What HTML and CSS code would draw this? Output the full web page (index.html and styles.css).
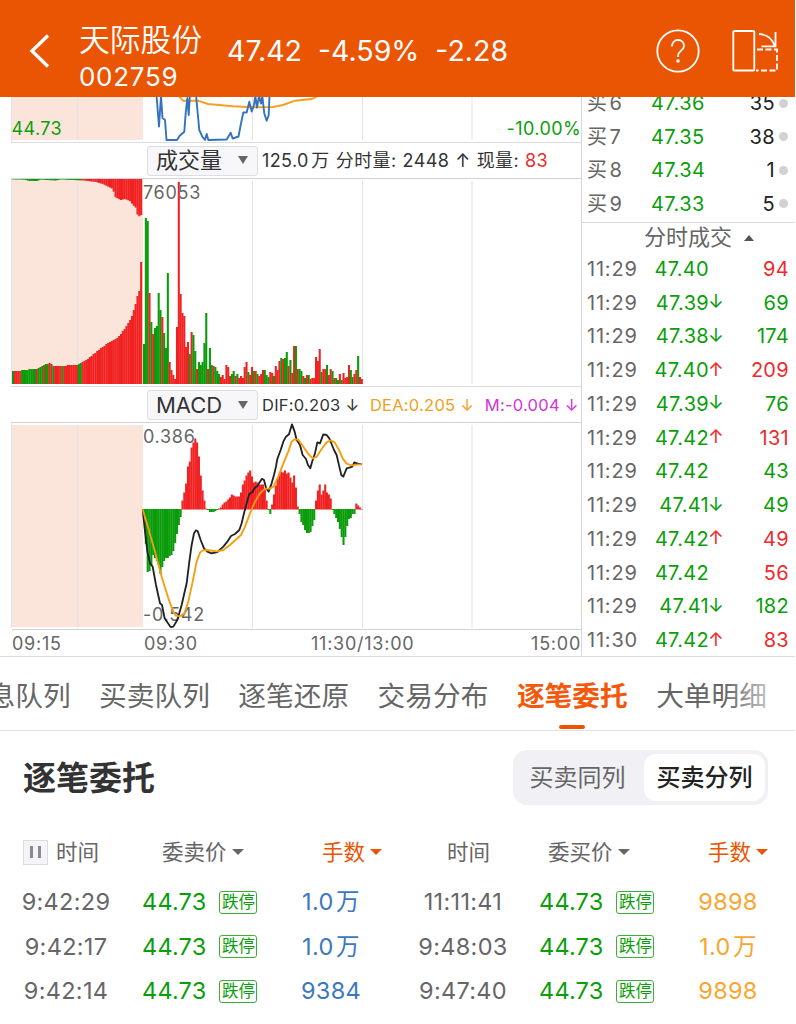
FILE: index.html
```html
<!DOCTYPE html>
<html lang="zh-CN">
<head>
    <meta charset="UTF-8">
    <meta name="viewport" content="width=device-width, initial-scale=1.0">
    <title>天际股份 002759</title>
    <link rel="stylesheet" href="styles.css">
</head>
<body>
    <header class="topbar">
        <svg class="back" width="22" height="36" viewBox="0 0 22 36"><path d="M20 2.500L4 18l16 15.500"/></svg>
        <div class="stock">
            <div class="stock-name">天际股份</div>
            <div class="stock-code">002759</div>
        </div>
        <div class="quote">
            <span>47.42</span>
            <span>-4.59%</span>
            <span>-2.28</span>
        </div>
        <div class="help">
            <svg width="44" height="44" viewBox="0 0 44 44">
                <circle cx="22" cy="22" r="20.700"/>
                <path d="M16 17.500c0-4 2.600-6.500 6-6.500s6 2.400 6 5.700c0 5-6 5-6 10.300v1"/>
                <circle class="dot" cx="22" cy="32" r="1.800"/>
            </svg>
        </div>
        <svg class="rotate" width="48" height="44" viewBox="0 0 48 44">
            <rect x="2.300" y="2" width="21" height="39.500" rx="1"/>
            <path d="M28 5c8 .500 13 4 15.500 11.500M44.500 3v14.300H30.500"/>
            <path class="dash" d="M26 20.500h20v21H25"/>
        </svg>
    </header>

    <main class="market">
        <section class="charts">
            <svg class="chart" id="priceChart" width="581" height="45" viewBox="0 97 581 45">
                <rect class="preopen" x="12" y="97" width="131" height="43"/>
                <path class="grid" d="M11.500 97v45M77.500 97v43M252.500 97v43M362.500 97v43M472 97v43"/>
                <polyline class="avg" points="178,95 183,100.700 198,100.700 208,104 233,106.300 252,107.300 273,107 283,105 295,100.700 312,99 318,96"/>
                <polyline class="price" points="156.500,95 159,126.500 161,96 162.500,118 165,120 166.500,140 177,140 179.500,136 184.300,131.700 185.700,113 187.300,98 188.700,115 190,93 196,95 199.300,130 202.300,136.700 205,140 206.700,134 208.300,140 226.700,139.500 230.700,132.700 232.700,138.500 238.500,136.500 240.700,125 243.300,112.500 246.700,112.500 249.300,101.700 251.700,111.500 254,105 255.300,96 257,107.500 259,96 261,103.500 262.300,96 264.300,113.500 266.700,120.700 268.700,115 269.500,95"/>
                <text class="down" x="11.500" y="135">44.73</text>
                <text class="down" x="581" y="135" text-anchor="end">-10.00%</text>
            </svg>

            <div class="indicator">
                <div class="picker">成交量<i class="caret"></i></div>
                <div class="readout volume-readout">
                    <span>125.0<u>万</u></span>
                    <span>分时量:</span>
                    <span>2448</span>
                    <span>↑</span>
                    <span>现量:</span>
                    <span class="red">83</span>
                </div>
            </div>

            <svg class="chart" id="volumeChart" width="581" height="207" viewBox="0 179 581 207">
                <rect class="preopen" x="12" y="180" width="131" height="204"/>
                <path class="grid" d="M11.500 179v205M77.500 181v203M252.500 181v203M362.500 181v203M472 181v203"/>
                <g id="volumeBars"></g>
                <text x="143" y="199">76053</text>
            </svg>

            <div class="indicator">
                <div class="picker latin">MACD<i class="caret"></i></div>
                <div class="readout macd-readout">
                    <span>DIF:0.203 ↓</span>
                    <span class="dea">DEA:0.205 ↓</span>
                    <span class="macd">M:-0.004 ↓</span>
                </div>
            </div>

            <svg class="chart" id="macdChart" width="581" height="206" viewBox="0 423 581 206">
                <rect class="preopen" x="12" y="425" width="131" height="202"/>
                <path class="grid" d="M11.500 423v205M77.500 425v203M252.500 425v203M362.500 425v203M472 425v203"/>
                <g id="macdBars"></g>
                <text x="143" y="443">0.386</text>
                <text x="143" y="621">-0.542</text>
                <g transform="translate(140 385) scale(.3333)">
                    <polyline class="dif-line" points="8,373 14,430 22,500 30,535 38,545 48,600 60,655 66,660 74,700 84,715 92,726 100,725 112,705 125,660 133,625 140,595 148,530 155,480 162,445 168,436 173,438 182,465 192,490 202,500 215,505 232,501 250,485 262,470 273,453 285,447 298,435 305,415 312,385 320,355 328,327 338,320 345,308 352,303 360,290 366,281 372,285 378,308 386,320 395,295 402,270 408,245 412,222 422,195 430,170 438,155 447,148 456,118 464,140 470,165 480,180 488,210 498,222 504,240 511,250 518,225 525,205 532,172 540,175 550,148 560,150 568,160 576,180 582,195 590,210 598,245 604,270 610,275 620,250 628,248 637,245 643,232 653,236 665,238"/>
                    <polyline class="dea-line" points="8,373 25,430 45,500 65,575 85,640 100,680 108,692 120,694 133,685 145,650 158,590 170,530 180,503 188,496 200,495 230,499 250,495 270,480 290,462 303,450 315,425 330,385 345,350 360,325 375,311 390,311 400,305 415,275 430,235 445,200 455,170 463,163 475,164 490,185 505,207 518,220 530,215 545,192 560,172 572,166 584,172 597,195 608,220 620,236 635,241 650,239 665,238"/>
                </g>
            </svg>

            <div class="axis">
                <span>09:15</span>
                <span>09:30</span>
                <span>11:30/13:00</span>
                <span>15:00</span>
            </div>
        </section>

        <aside class="side">
            <div class="orders">
                <div class="order"><span>买<u>6</u></span><b>47.36</b><em>35</em><i></i></div>
                <div class="order"><span>买<u>7</u></span><b>47.35</b><em>38</em><i></i></div>
                <div class="order"><span>买<u>8</u></span><b>47.34</b><em>1</em><i></i></div>
                <div class="order"><span>买<u>9</u></span><b>47.33</b><em>5</em><i></i></div>
            </div>
            <div class="trades-title">分时成交<i class="caret-up"></i></div>
            <div class="trades">
                <div class="trade"><span>11:29</span><b>47.40</b><i></i><em class="red">94</em></div>
                <div class="trade"><span>11:29</span><b>47.39</b><i>↓</i><em>69</em></div>
                <div class="trade"><span>11:29</span><b>47.38</b><i>↓</i><em>174</em></div>
                <div class="trade"><span>11:29</span><b>47.40</b><i class="red">↑</i><em class="red">209</em></div>
                <div class="trade"><span>11:29</span><b>47.39</b><i>↓</i><em>76</em></div>
                <div class="trade"><span>11:29</span><b>47.42</b><i class="red">↑</i><em class="red">131</em></div>
                <div class="trade"><span>11:29</span><b>47.42</b><i></i><em>43</em></div>
                <div class="trade"><span>11:29</span><b>47.41</b><i>↓</i><em>49</em></div>
                <div class="trade"><span>11:29</span><b>47.42</b><i class="red">↑</i><em class="red">49</em></div>
                <div class="trade"><span>11:29</span><b>47.42</b><i></i><em class="red">56</em></div>
                <div class="trade"><span>11:29</span><b>47.41</b><i>↓</i><em>182</em></div>
                <div class="trade"><span>11:30</span><b>47.42</b><i class="red">↑</i><em class="red">83</em></div>
            </div>
        </aside>
    </main>

    <nav class="tabs">
        <span class="tab">息队列</span>
        <span class="tab">买卖队列</span>
        <span class="tab">逐笔还原</span>
        <span class="tab">交易分布</span>
        <span class="tab active">逐笔委托</span>
        <span class="tab">大单明细</span>
    </nav>

    <section class="entrust">
        <div class="entrust-head">
            <h2>逐笔委托</h2>
            <div class="segment">
                <span>买卖同列</span>
                <span class="on">买卖分列</span>
            </div>
        </div>

        <div class="row head">
            <div class="time"><i class="pause"></i>时间</div>
            <div class="cost">委卖价<i class="sort"></i></div>
            <div class="lots">手数<i class="sort"></i></div>
            <div class="time buy">时间</div>
            <div class="cost buy">委买价<i class="sort"></i></div>
            <div class="lots buy">手数<i class="sort"></i></div>
        </div>
        <div class="row">
            <div class="time">9:42:29</div>
            <div class="cost">44.73<span class="tag">跌停</span></div>
            <div class="lots">1.0<u>万</u></div>
            <div class="time buy">11:11:41</div>
            <div class="cost buy">44.73<span class="tag">跌停</span></div>
            <div class="lots buy">9898</div>
        </div>
        <div class="row">
            <div class="time">9:42:17</div>
            <div class="cost">44.73<span class="tag">跌停</span></div>
            <div class="lots">1.0<u>万</u></div>
            <div class="time buy">9:48:03</div>
            <div class="cost buy">44.73<span class="tag">跌停</span></div>
            <div class="lots buy">1.0<u>万</u></div>
        </div>
        <div class="row">
            <div class="time">9:42:14</div>
            <div class="cost">44.73<span class="tag">跌停</span></div>
            <div class="lots">9384</div>
            <div class="time buy">9:47:40</div>
            <div class="cost buy">44.73<span class="tag">跌停</span></div>
            <div class="lots buy">9898</div>
        </div>
    </section>

    <script src="script.js"></script>
</body>
</html>
```

FILE: styles.css
```css
* {
    box-sizing: border-box;
}
body {
    margin: 0;
    width: 795px;
    height: 1024px;
    overflow: hidden;
    background: #fff;
    color: #666;
    font-family: Inter, "Noto Sans CJK SC", sans-serif;
    font-size: 20px;
    line-height: 1.2;
}
b, i, em {
    font-weight: normal;
    font-style: normal;
}
/* thin gap between digits and a Chinese unit */
u {
    margin-left: 2.500px;
    text-decoration: none;
}
.red {
    color: #ee2a2d !important;
}

/* top bar */
.topbar {
    display: flex;
    align-items: center;
    height: 97px;
    padding: 5px 15px 0 28px;
    background: #ea5504;
    color: #fff;
}
.topbar svg {
    fill: none;
    stroke: #fff;
    stroke-width: 1.8;
}
.topbar .back {
    stroke-width: 3.4;
}
.stock {
    width: 148px;
    margin-left: 29px;
    padding-top: 15px;
}
.stock-name {
    font-size: 30.800px;
    line-height: 36px;
    font-weight: 350;
}
.stock-code {
    font-size: 26px;
    line-height: 37px;
    letter-spacing: 0.7px;
}
.quote {
    display: flex;
    gap: 16px;
    width: 429px;
    padding-top: 1px;
    font-size: 28.500px;
}
.help {
    width: 75px;
    height: 44px;
}
.topbar .dot {
    fill: #fff;
    stroke: none;
}
.topbar .dash {
    stroke-dasharray: 6 2.5;
}

/* charts */
.market {
    display: flex;
    height: 560px;
    border-bottom: 1px solid #dcdce0;
}
.charts {
    width: 582px;
    border-right: 1px solid #d8d8dc;
}
.chart {
    display: block;
}
.chart text {
    font-size: 18px;
    fill: #666;
    letter-spacing: 0.7px;
}
.chart .down {
    fill: #0a9e0a;
    letter-spacing: 0.4px;
}
.chart polyline {
    fill: none;
    stroke-linejoin: round;
}
.preopen {
    fill: #fbe5da;
}
.grid {
    stroke: #e3e3e6;
    fill: none;
}
.price {
    stroke: #3373bd;
    stroke-width: 1.9;
}
.avg {
    stroke: #f5a01e;
    stroke-width: 1.9;
}
.dif-line {
    stroke: #222;
    stroke-width: 5.5;
}
.dea-line {
    stroke: #f79c0c;
    stroke-width: 5.5;
}
.up-bar {
    fill: #f12222;
}
.down-bar {
    fill: #0a9c0a;
}
.indicator {
    display: flex;
    align-items: center;
    height: 37px;
    margin-left: 11px;
    padding-left: 136px;
    border-top: 1px solid #dcdce0;
    border-bottom: 1px solid #d2d2d6;
}
.picker {
    display: flex;
    align-items: center;
    justify-content: space-between;
    width: 111px;
    height: 30px;
    padding: 0 9px 1px 8px;
    border: 1px solid #dedee2;
    border-radius: 3px;
    background: #f7f7fa;
    color: #333;
    font-size: 22px;
    line-height: 24px;
}
.picker.latin {
    padding-bottom: 0;
}
.caret {
    border: 5px solid transparent;
    border-top: 8px solid #666;
    border-bottom: 0;
}
.readout {
    display: flex;
    align-items: baseline;
    margin-left: 4px;
    color: #333;
    font-size: 18px;
    line-height: 24px;
    white-space: nowrap;
}
.volume-readout {
    gap: 6px;
    font-size: 18px;
    letter-spacing: 0.4px;
}
.macd-readout {
    gap: 10.500px;
    font-size: 16.500px;
    letter-spacing: 0.25px;
}
.dea {
    color: #f0a020;
}
.macd {
    color: #cf35d8;
}
.axis {
    display: flex;
    height: 27px;
    margin-left: 12px;
    border-top: 1px solid #d2d2d6;
    font-size: 18px;
    line-height: 27px;
    letter-spacing: 0.75px;
}
.axis span:nth-child(1) {
    width: 132px;
}
.axis span:nth-child(2) {
    width: 167px;
}
.axis span:nth-child(4) {
    margin-left: auto;
}

/* order book and trades */
.side {
    width: 213px;
    font-size: 20px;
}
.orders {
    height: 126px;
    padding-left: 5px;
    overflow: hidden;
    border-bottom: 1px solid #d8d8dc;
}
.order {
    display: flex;
    align-items: center;
    height: 33.500px;
}
.order:first-child {
    margin-top: -10.500px;
}
.order span {
    width: 64px;
}
.order b, .order em {
    letter-spacing: 0.4px;
}
.order b, .trade b, .trade i, .trade em {
    color: #0a9e0a;
}
.order em {
    flex: 1;
    color: #222;
    text-align: right;
}
.order i {
    width: 9px;
    height: 9px;
    margin: 0 7px 0 4px;
    border-radius: 50%;
    background: #d2d2d5;
}
.trades-title {
    display: flex;
    align-items: center;
    height: 29px;
    padding-left: 62px;
    font-size: 22px;
}
.caret-up {
    margin-left: 12px;
    border: 5px solid transparent;
    border-bottom: 6px solid #555;
    border-top: 0;
}
.trade {
    display: flex;
    align-items: center;
    height: 33.750px;
    padding: 0 6px 0 5px;
}
.trade span {
    width: 52px;
    letter-spacing: 0.8px;
}
.trade b {
    width: 70px;
    letter-spacing: 0.3px;
    text-align: right;
}
.trade i {
    width: 14px;
    margin-left: -1px;
    margin-right: 1px;
    text-align: center;
    font-size: 19px;
}
.trade em {
    flex: 1;
    letter-spacing: 0.3px;
    text-align: right;
}

/* tabs */
.tabs {
    position: relative;
    display: flex;
    gap: 28.500px;
    height: 74px;
    margin-right: -1px;
    padding-right: 30px;
    overflow: hidden;
    border-bottom: 1px solid #dfe0e3;
    font-size: 27.700px;
    line-height: 78px;
    white-space: nowrap;
}
.tab {
    flex: none;
}
.tab:first-child {
    margin-left: -12.500px;
}
.tab.active {
    position: relative;
    color: #f4580a;
    font-weight: 700;
}
.tab.active::after {
    content: "";
    position: absolute;
    left: 42px;
    top: 68px;
    width: 26px;
    height: 4px;
    border-radius: 2px;
    background: #ea5504;
}
.tabs::after {
    content: "";
    position: absolute;
    top: 0;
    right: 0;
    width: 72px;
    height: 72px;
    background: linear-gradient(to right, rgba(255, 255, 255, 0), #fff);
}

/* entrust list */
.entrust-head {
    display: flex;
    align-items: center;
    justify-content: space-between;
    height: 93px;
    padding: 0 27px 0 23px;
}
.entrust-head h2 {
    margin: 0;
    padding-top: 2px;
    color: #333;
    font-size: 33px;
}
.segment {
    display: flex;
    width: 255px;
    height: 55px;
    padding: 4px 3px;
    border-radius: 14px;
    background: #f1f1f5;
    font-size: 24px;
    line-height: 47px;
    text-align: center;
}
.segment span {
    flex: 1;
    padding-right: 5px;
    border-radius: 12px;
}
.segment .on {
    flex: none;
    width: 121px;
    padding: 0;
    background: #fff;
    color: #222;
    font-weight: 500;
}
.row {
    display: grid;
    grid-template-columns: 132px 150px 98px 17px 132px 150px 98px;
    align-items: center;
    height: 44.500px;
    font-size: 23.500px;
    line-height: 30px;
}
.row .time {
    text-align: center;
    letter-spacing: 0.3px;
}
.row .time.buy {
    grid-column: 5;
}
.cost {
    display: flex;
    align-items: center;
    padding-left: 10px;
    color: #0a9e0a;
    letter-spacing: 0.2px;
}
.tag {
    width: 38px;
    height: 23px;
    margin-left: 13px;
    border: 1px solid #3ab03a;
    border-radius: 3px;
    font-size: 16.500px;
    line-height: 20px;
    letter-spacing: 0;
    text-align: center;
}
.lots {
    color: #3b78c0;
    text-align: center;
    letter-spacing: 0.3px;
}
.lots.buy {
    color: #f9a530;
}
.head {
    height: 56px;
    font-size: 21.500px;
}
.head .time, .head .cost, .head .lots {
    letter-spacing: 0;
}
.head .time {
    display: flex;
    align-items: center;
    padding-left: 23px;
}
.head .time.buy {
    padding-left: 50px;
}
.head .cost {
    padding-left: 30px;
    color: #666;
}
.head .cost.buy {
    padding-left: 19px;
}
.head .lots {
    display: flex;
    align-items: center;
    padding-left: 40px;
    color: #ea5504;
    white-space: nowrap;
}
.head .lots.buy {
    padding-left: 29px;
    color: #ea5504;
}
.sort {
    margin-left: 5px;
    border: 6px solid transparent;
    border-top: 6px solid currentColor;
    border-bottom: 0;
}
.pause {
    display: flex;
    justify-content: center;
    align-items: center;
    width: 25px;
    height: 25px;
    margin-right: 8px;
    border: 1px solid #dcdce0;
    background: #f5f5f8;
}
.pause::before {
    content: "";
    width: 5px;
    height: 12px;
    border: solid #8a8a8e;
    border-width: 0 3px;
}
```

FILE: script.js
```js
const SVG_NS = 'http://www.w3.org/2000/svg';
const STEP = 1.83;
const OPEN_X = 143;

function addBar(group, x, y, height, up) {
    const rect = document.createElementNS(SVG_NS, 'rect');
    rect.setAttribute('x', x.toFixed(2));
    rect.setAttribute('y', y);
    rect.setAttribute('width', STEP + 0.25);
    rect.setAttribute('height', height);
    rect.setAttribute('class', up ? 'up-bar' : 'down-bar');
    group.appendChild(rect);
}

// linear interpolation between [x, value] pairs
function valueAt(points, x) {
    for (let i = 1; i < points.length; i++) {
        if (x <= points[i][0]) {
            const [x0, v0] = points[i - 1];
            const [x1, v1] = points[i];
            return v0 + (v1 - v0) * (x - x0) / (x1 - x0);
        }
    }
    return points[points.length - 1][1];
}

// minute volume, g = down minute, r = up minute
const volume = ('g40 g166 g163 r91 g62 r50 g56 g58 g91 g74 r67 g51 g36 g111 r22 r14 r9 r5 r57 r202 r90 r71 r68 r37 r42 ' +
    'g30 r52 g49 g33 r15 g22 g19 g22 g41 g71 r15 g36 g19 r18 g17 g13 g10 r7 r9 r5 r19 r17 r8 g10 g13 r8 g10 r6 r8 r6 ' +
    'r17 r22 g12 r9 r17 g13 r13 g10 r8 r10 r14 g14 g9 g7 r12 r11 g8 r18 r14 r23 g26 r25 g26 g32 r18 g24 r11 r38 g38 ' +
    'r15 g15 g13 r8 g6 r9 g9 r5 r6 r6 r27 r23 r35 g12 r15 r15 g19 r9 r15 g13 r6 g6 g4 r10 g4 r11 r6 r7 r19 g14 g7 r10 ' +
    'r14 g28 r7 r5').split(' ');

const macd = [-5, -35, -63, -62, -56, -46, -49, -52, -56, -65, -58, -52, -49, -49, -47, -46, -42, -34, -25, -16, -8,
    9, 17, 26, 43, 48, 62, 67, 71, 67, 53, 34, 19, 9, 1, -1, -3, -3, -3, -2, -1, 1, 2, 5, 7, 8, 10, 12, 15, 14, 13,
    13, 13, 17, 25, 29, 34, 37, 39, 33, 27, 28, 27, 25, 25, 25, 20, 9, -1, -5, 5, 15, 24, 31, 35, 38, 37, 39, 36, 37,
    32, 27, 34, 22, 3, -5, -13, -16, -21, -24, -24, -23, -17, -11, 9, 19, 25, 15, 19, 25, 17, 15, 11, -1, -5, -9, -13,
    -20, -28, -36, -28, -17, -10, -9, -5, -5, 6, 4, 2, 0.5];

// call auction: matched volume grows from the bottom, unmatched hangs from the top
const matched = [[12, 12.5], [23, 14], [36, 15.5], [43, 19], [50, 21], [52, 18], [60, 17.5], [70, 19], [77, 19],
    [82, 22], [88, 26], [94, 31], [100, 36], [106, 40], [110, 43], [116, 46], [120, 50], [124, 56], [128, 62],
    [131, 68], [134, 78], [137, 90], [139, 95], [140, 122]];
const unmatched = [[12, 0.5], [24, 0.7], [28, 2], [36, 2], [40, 0.6], [54, 1.5], [60, 0.5], [83, 1.5], [95, 3],
    [102, 5], [108, 8], [112, 10], [114, 18], [120, 21], [124, 20], [129, 22], [132, 26], [135, 29], [137, 38], [140, 36]];
const auctionColors = 'grrrrggggggggrgggrggrrgrrrrgrrrrrrrrgg';

const volumeBars = document.getElementById('volumeBars');
for (let i = 0; i < 71; i++) {
    const x = 12 + i * STEP;
    const h = Math.round(valueAt(matched, x));
    addBar(volumeBars, x, 384 - h, h, (auctionColors[i] || 'r') === 'r');
    addBar(volumeBars, x, 179, valueAt(unmatched, x).toFixed(1), x > 81);
}
volume.forEach((item, i) => {
    const h = Number(item.slice(1));
    addBar(volumeBars, OPEN_X + i * STEP, 384 - h, h, item[0] === 'r');
});

const macdBars = document.getElementById('macdBars');
macd.forEach((v, i) => {
    addBar(macdBars, OPEN_X + i * STEP, v > 0 ? 509.5 - v : 509, Math.abs(v), v > 0);
});
```
